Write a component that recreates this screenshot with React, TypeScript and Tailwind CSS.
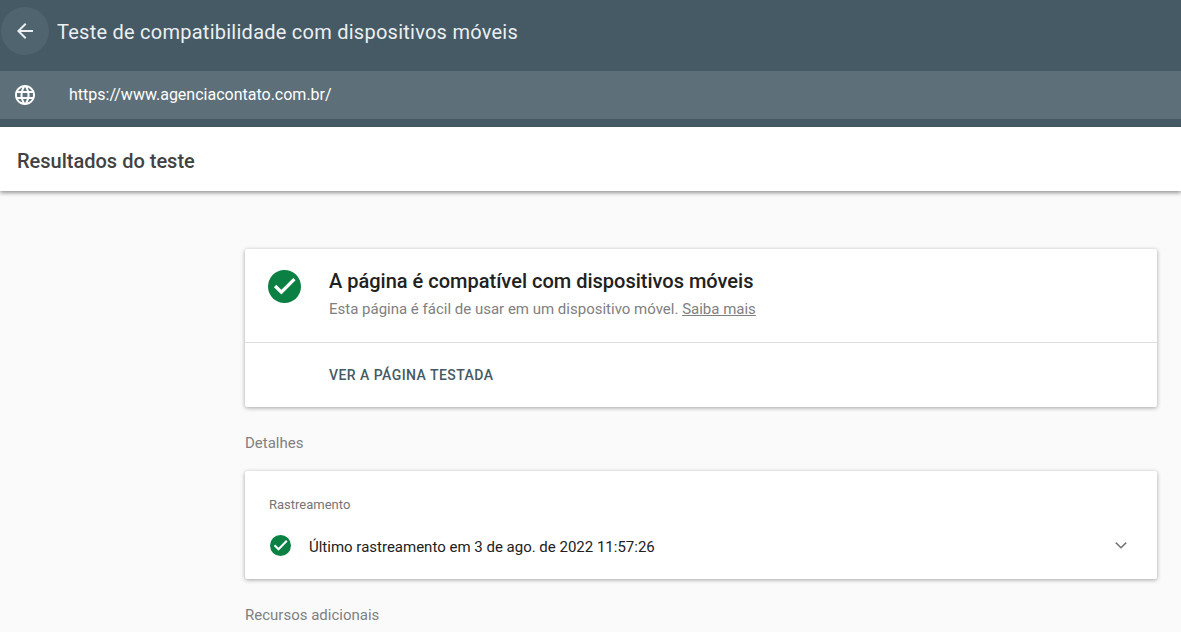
import React from "react";

function CheckCircle({ className }: { className: string }) {
  return (
    <svg viewBox="2 2 20 20" className={className}>
      <circle cx="12" cy="12" r="10" fill="#0b8043" />
      <path d="M6.3 11.7l3.8 3.8 7.9-8" fill="none" stroke="#fff" strokeWidth="2" />
    </svg>
  );
}

export default function App() {
  return (
    <div className="h-[632px] w-[1181px] overflow-hidden bg-[#fafafa] font-['Roboto',sans-serif]">
      <header className="h-[127px] bg-[#455a64] pb-2">
        <div className="flex h-[71px] items-start pl-[1px] pt-[7px]">
          <button className="flex h-12 w-12 items-center justify-center rounded-full bg-[#4f646e]">
            <svg viewBox="0 0 24 24" className="h-6 w-6" fill="#eceff1">
              <path d="M20 11H7.83l5.59-5.59L12 4l-8 8 8 8 1.41-1.41L7.83 13H20v-2z" />
            </svg>
          </button>
          <h1 className="ml-2 mt-[10px] text-[20px] leading-[30px] tracking-[0.25px] text-[#eceff1]">
            Teste de compatibilidade com dispositivos móveis
          </h1>
        </div>
        <div className="flex h-12 items-center bg-[#5d6f79] pl-[15px]">
          <svg viewBox="2 2 20 20" className="h-[20px] w-[20px]" fill="#fff">
            <path d="M11.99 2C6.47 2 2 6.48 2 12s4.47 10 9.99 10C17.52 22 22 17.52 22 12S17.52 2 11.99 2zm6.93 6h-2.95c-.32-1.25-.78-2.45-1.38-3.56 1.84.63 3.37 1.91 4.33 3.56zM12 4.04c.83 1.2 1.48 2.53 1.91 3.96h-3.82c.43-1.43 1.08-2.76 1.91-3.96zM4.26 14C4.1 13.36 4 12.69 4 12s.1-1.36.26-2h3.38c-.08.66-.14 1.32-.14 2 0 .68.06 1.34.14 2H4.26zm.82 2h2.95c.32 1.25.78 2.45 1.38 3.56-1.84-.63-3.37-1.9-4.33-3.56zm2.95-8H5.08c.96-1.66 2.49-2.93 4.33-3.56C8.81 5.55 8.35 6.75 8.03 8zM12 19.96c-.83-1.2-1.48-2.53-1.91-3.96h3.82c-.43 1.43-1.08 2.76-1.91 3.96zM14.34 14H9.66c-.09-.66-.16-1.32-.16-2 0-.68.07-1.35.16-2h4.68c.09.65.16 1.32.16 2 0 .68-.07 1.34-.16 2zm.25 5.56c.6-1.11 1.06-2.31 1.38-3.56h2.95c-.96 1.65-2.49 2.93-4.33 3.56zM16.36 14c.08-.66.14-1.32.14-2 0-.68-.06-1.34-.14-2h3.38c.16.64.26 1.31.26 2s-.1 1.36-.26 2h-3.38z" />
          </svg>
          <span className="ml-[34px] text-[16px] text-white">https://www.agenciacontato.com.br/</span>
        </div>
      </header>

      <div className="flex h-16 items-center bg-white pl-[17px] pt-1 shadow-[0_2px_4px_rgba(0,0,0,0.4)]">
        <h2 className="text-[20px] font-medium leading-7 text-[#424242]">Resultados do teste</h2>
      </div>

      <main className="ml-[245px] w-[912px] pt-[58px]">
        <section className="rounded-[2px] bg-white shadow-[0_1px_4px_rgba(0,0,0,0.35)]">
          <div className="flex h-[94px] items-start border-b border-[#e0e0e0]">
            <CheckCircle className="ml-[23px] mt-[21px] h-[33px] w-[33px]" />
            <div className="ml-[28px] mt-[19px]">
              <p className="text-[20px] font-medium leading-[26px] text-[#212121]">
                A página é compatível com dispositivos móveis
              </p>
              <p className="mt-[3px] text-[15px] leading-[24px] text-[#808080]">
                Esta página é fácil de usar em um dispositivo móvel. <span className="underline">Saiba mais</span>
              </p>
            </div>
          </div>
          <div className="flex h-[64px] items-center pl-[84px]">
            <span className="text-[14px] font-medium tracking-[0.45px] text-[#455a64]">VER A PÁGINA TESTADA</span>
          </div>
        </section>

        <p className="mt-[26px] text-[15px] leading-5 text-[#808080]">Detalhes</p>

        <section className="mt-[18px] h-[108px] rounded-[2px] bg-white pl-6 pt-[26px] shadow-[0_1px_4px_rgba(0,0,0,0.35)]">
          <p className="text-[13px] leading-4 text-[#757575]">Rastreamento</p>
          <div className="mt-[20px] flex items-center">
            <CheckCircle className="ml-[1px] h-[21px] w-[21px]" />
            <span className="ml-[18px] pt-1 text-[15px] leading-5 text-[#212121]">
              Último rastreamento em 3 de ago. de 2022 11:57:26
            </span>
            <svg viewBox="0 0 24 24" className="ml-auto mr-6 h-6 w-6" fill="none" stroke="#757575" strokeWidth="1.5">
              <path d="M6.8 9.6 12 14.8l5.2-5.2" />
            </svg>
          </div>
        </section>

        <p className="mt-[26px] text-[15px] leading-5 text-[#808080]">Recursos adicionais</p>
      </main>
    </div>
  );
}
